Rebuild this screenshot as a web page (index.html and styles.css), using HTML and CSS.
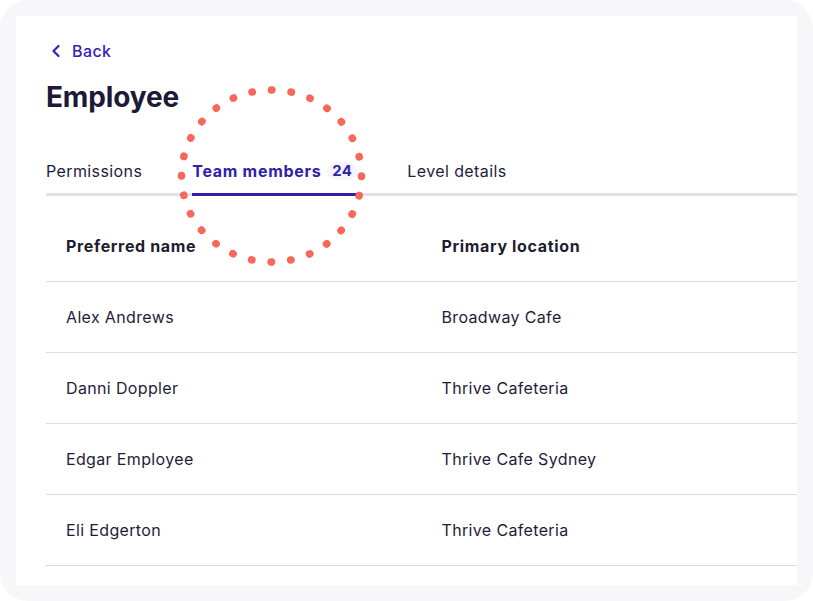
FILE: index.html
```html
<!DOCTYPE html>
<html>
<head>
<meta charset="utf-8">
<link rel="stylesheet" href="styles.css">
</head>
<body>
<div class="frame">
  <div class="card">
    <a class="back" href="#">
      <svg class="chev" width="10" height="14" viewBox="0 0 10 14"><path d="M7.5 2 L2.5 7 L7.5 12" fill="none" stroke="currentColor" stroke-width="2.2" stroke-linecap="round" stroke-linejoin="round"/></svg>
      <span>Back</span>
    </a>
    <h1 class="title">Employee</h1>
    <div class="tabs">
      <div class="tab">Permissions</div>
      <div class="tab active">Team members <span class="badge">24</span></div>
      <div class="tab">Level details</div>
    </div>
    <table class="grid">
      <thead>
        <tr><th>Preferred name</th><th>Primary location</th></tr>
      </thead>
      <tbody>
        <tr><td>Alex Andrews</td><td>Broadway Cafe</td></tr>
        <tr><td>Danni Doppler</td><td>Thrive Cafeteria</td></tr>
        <tr><td>Edgar Employee</td><td>Thrive Cafe Sydney</td></tr>
        <tr><td>Eli Edgerton</td><td>Thrive Cafeteria</td></tr>
      </tbody>
    </table>
  </div>
  <svg class="ring" width="813" height="601" viewBox="0 0 813 601">
    <ellipse cx="271.5" cy="176" rx="90" ry="86" pathLength="28" fill="none" stroke="#f8675c" stroke-width="7.5" stroke-linecap="round" stroke-dasharray="0.02 0.98"/>
  </svg>
</div>
</body>
</html>
```

FILE: styles.css
```css
html, body {
  margin: 0;
  padding: 0;
  background: #ffffff;
}
body {
  font-family: Inter, "Noto Sans", sans-serif;
  color: #1f1c3b;
}
.frame {
  position: relative;
  width: 813px;
  height: 601px;
  box-sizing: border-box;
  padding: 16px;
  background: #f7f7f9;
  border-radius: 28px;
}
.card {
  background: #ffffff;
  height: 569px;
  box-sizing: border-box;
  padding: 23px 0 0 30px;
}
.back {
  display: flex;
  align-items: center;
  gap: 11px;
  color: #3522bd;
  text-decoration: none;
  font-size: 16px;
  font-weight: 500;
  line-height: 24px;
  letter-spacing: 0.4px;
  padding-left: 5px;
  width: max-content;
}
.chev {
  display: block;
}
.title {
  margin: 16px 0 0 0;
  font-size: 28px;
  line-height: 36px;
  font-weight: 700;
  color: #1d1a38;
  letter-spacing: -0.15px;
}
.tabs {
  display: flex;
  gap: 50px;
  margin-top: 44px;
  border-bottom: 3px solid #e2e3ea;
}
.tab {
  display: flex;
  align-items: center;
  font-size: 16px;
  line-height: 24px;
  letter-spacing: 0.4px;
  padding-bottom: 10px;
  color: #1f1c3b;
}
.tab.active {
  color: #3020ae;
  font-weight: 700;
  letter-spacing: 0.7px;
  border-bottom: 3px solid #2f1ea8;
  margin-bottom: -3px;
}
.badge {
  margin-left: 6px;
  background: #f6f5fc;
  border-radius: 9px;
  font-size: 15px;
  font-weight: 700;
  line-height: 18px;
  letter-spacing: 0.3px;
  padding: 0 5px;
}
.grid {
  width: 751px;
  border-collapse: collapse;
  margin-top: 15px;
  table-layout: fixed;
}
.grid th, .grid td {
  text-align: left;
  padding: 0 20px;
  height: 70px;
  font-size: 16px;
  line-height: 24px;
  border-bottom: 1px solid #dcdce2;
}
.grid th {
  font-weight: 700;
  letter-spacing: 0.65px;
  color: #1f1c30;
}
.grid td {
  font-weight: 400;
  letter-spacing: 0.35px;
  color: #1f1c3b;
}
.ring {
  position: absolute;
  left: 0;
  top: 0;
  pointer-events: none;
}
```
